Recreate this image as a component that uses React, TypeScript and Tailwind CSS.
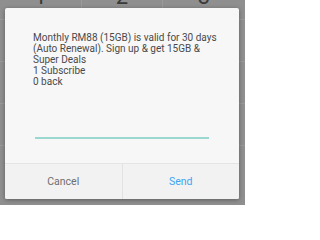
export default function App() {
  const keys = ["1", "2", "3", "4", "5", "6", "7", "8", "9", "*", "0", "#"];
  return (
    <div className="relative w-[245px] h-[205px] overflow-hidden bg-[#8f8f8f] font-['Roboto',sans-serif]">
      {/* dimmed dialer keypad behind */}
      <div className="grid grid-cols-[82px_81px_82px] auto-rows-[42px] -mt-[22px]">
        {keys.map((k, i) => (
          <div
            key={k}
            className={`flex items-center justify-center pb-[4px] text-[22px] text-[#3a3a3a] border-b border-[#9a9a9a] ${i % 3 !== 2 ? "border-r" : ""}`}
          >
            {k}
          </div>
        ))}
      </div>

      <div className="absolute left-[5px] top-[8px] w-[234px] h-[191px] flex flex-col rounded-[2px] bg-[#f7f7f7] shadow-[0_1px_4px_rgba(0,0,0,0.35)] overflow-hidden">
        <div className="flex-1 px-[28px] pt-[24px]">
          <p className="whitespace-nowrap text-[10px] leading-[11px] text-[#4a4a4a]">
            Monthly RM88 (15GB) is valid for 30 days
            <br />
            (Auto Renewal). Sign up &amp; get 15GB &amp;
            <br />
            Super Deals
            <br />
            1 Subscribe
            <br />
            0 back
          </p>
          <div className="mt-[50px] mx-[2px] h-[2px] bg-[#9bd8d0]" />
        </div>
        <div className="h-[36px] flex border-t border-[#e4e4e4] bg-[#f2f2f2]">
          <button className="flex-1 text-[10.5px] text-[#6e6e6e] border-r border-[#e2e2e2]">Cancel</button>
          <button className="flex-1 text-[10.5px] text-[#40a4f4]">Send</button>
        </div>
      </div>
    </div>
  );
}
